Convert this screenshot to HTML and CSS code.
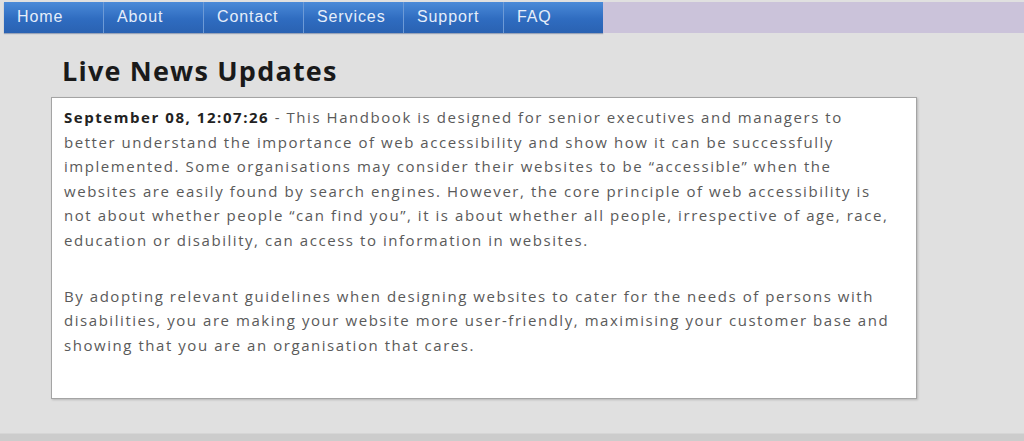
FILE: index.html
```html
<!DOCTYPE html>
<html lang="en">
<head>
    <meta charset="UTF-8">
    <title>Live News Updates</title>
    <link rel="stylesheet" href="styles.css">
</head>
<body>
    <div class="topbar">
        <ul class="menu">
            <li><a href="#">Home</a></li>
            <li><a href="#">About</a></li>
            <li><a href="#">Contact</a></li>
            <li><a href="#">Services</a></li>
            <li><a href="#">Support</a></li>
            <li><a href="#">FAQ</a></li>
        </ul>
        <div class="filler"></div>
    </div>
    <div class="main">
        <h1>Live News Updates</h1>
        <div class="newsBox">
            <p><b>September 08, 12:07:26</b> - This Handbook is designed for senior executives and managers to better understand the importance of web accessibility and show how it can be successfully implemented. Some organisations may consider their websites to be “accessible” when the websites are easily found by search engines. However, the core principle of web accessibility is not about whether people “can find you”, it is about whether all people, irrespective of age, race, education or disability, can access to information in websites.</p>
            <p>By adopting relevant guidelines when designing websites to cater for the needs of persons with disabilities, you are making your website more user-friendly, maximising your customer base and showing that you are an organisation that cares.</p>
        </div>
    </div>
    <div class="bottom"></div>
</body>
</html>
```

FILE: styles.css
```css
body {
    margin: 0;
    background: #e0e0e0;
    font-family: "Open Sans", Arial, sans-serif;
    height: 441px;
    display: flex;
    flex-direction: column;
    overflow: hidden;
}
.topbar {
    display: flex;
    height: 31px;
    margin: 2px 0 0 4px;
}
.menu {
    list-style: none;
    margin: 0;
    padding: 0;
    display: flex;
    background: linear-gradient(#4a8ad8, #2f6cc0 55%, #2a62b2);
    box-shadow: 0 1px 1px #9aa4b8;
}
.menu li {
    width: 99px;
    border-left: 1px solid #6d9ad6;
}
.menu li:first-child {
    border-left: none;
}
.menu a {
    display: block;
    padding: 0 0 0 13px;
    line-height: 30px;
    color: #e6eefa;
    text-decoration: none;
    font-family: "Liberation Sans", Arial, sans-serif;
    font-size: 16px;
    letter-spacing: 0.9px;
}
.filler {
    flex: 1;
    background: #cbc3da;
}
.main {
    flex: 1;
    padding: 0 107px 0 51px;
}
h1 {
    font-family: "Open Sans", sans-serif;
    font-weight: 700;
    font-size: 27px;
    letter-spacing: 1.2px;
    color: #1a1a1a;
    margin: 19px 0 8px 11px;
}
.newsBox {
    background: #fff;
    border: 1px solid #a4a4a4;
    box-shadow: 1px 1px 2px #b8b8b8;
    height: 293px;
    padding: 7px 19px 0 12px;
}
.newsBox p {
    margin: 0 0 31px 0;
    font-size: 15px;
    line-height: 24.6px;
    color: #5a5a5a;
    letter-spacing: 1.55px;
}
.newsBox b {
    color: #222;
}
.bottom {
    height: 7px;
    background: #cccccc;
    border-top: 1px solid #d6d6d6;
}
```
